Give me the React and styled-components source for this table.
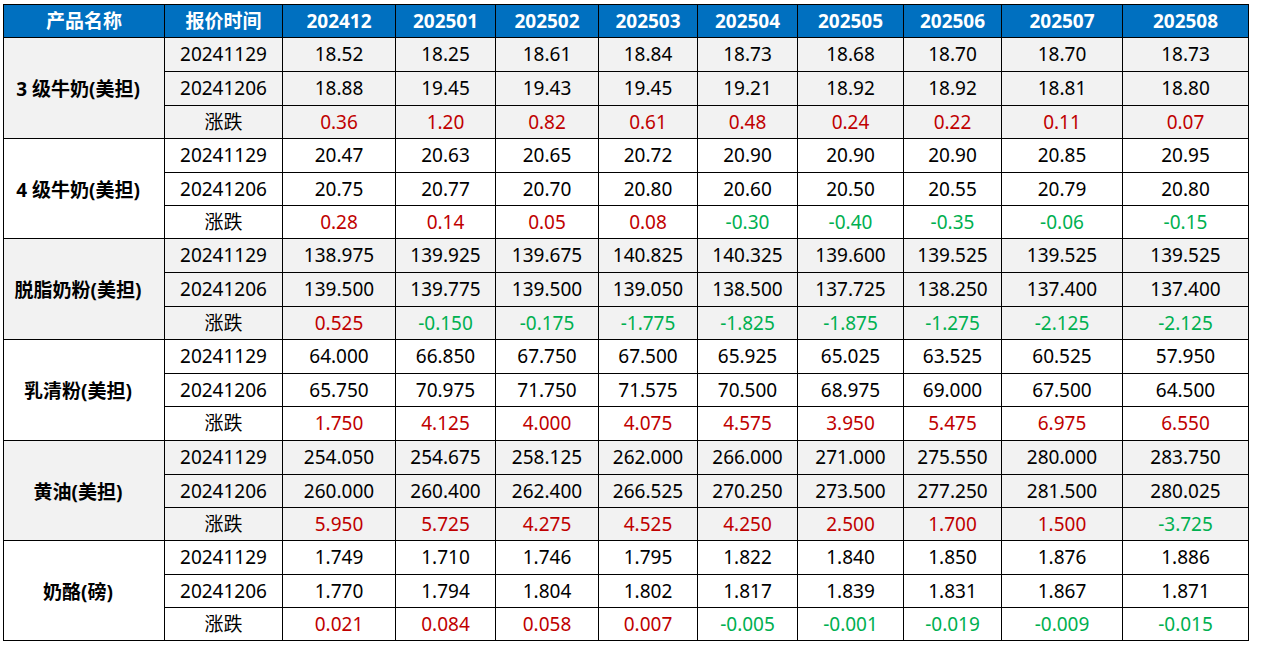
import React from 'react';
import styled, { createGlobalStyle } from 'styled-components';

const GlobalStyle = createGlobalStyle`
  html, body {
    margin: 0;
    padding: 0;
    background: #ffffff;
  }
  body {
    padding: 4px 0 0 3px;
    font-family: "Noto Sans", "Noto Sans CJK SC", sans-serif;
  }
`;

const Table = styled.table`
  border-collapse: collapse;
  table-layout: fixed;
  width: 1246px;
  font-size: 19px;
  color: #000;
`;

const HeadCell = styled.th`
  background: #0070c0;
  color: #ffffff;
  font-weight: 700;
  height: 32px;
  padding: 0;
  border: 1px solid #000;
  text-align: center;
  line-height: 1;
`;

const Row = styled.tr`
  height: ${(p) => p.$h}px;
  background: ${(p) => (p.$shade ? '#f2f2f2' : '#ffffff')};
`;

const NameCell = styled.td`
  font-weight: 700;
  text-align: center;
  padding: 0 12px 0 0;
  border: 1px solid #000;
  white-space: nowrap;
`;

const Cell = styled.td`
  text-align: center;
  padding: 0;
  border: 1px solid #000;
  line-height: 1;
  color: ${(p) => (p.$tone === 'up' ? '#c00000' : p.$tone === 'down' ? '#00b050' : '#000')};
`;

const widths = [161, 118, 113, 100, 103, 99, 100, 106, 98, 121, 126];
const months = ['202412', '202501', '202502', '202503', '202504', '202505', '202506', '202507', '202508'];

const groups = [
  {
    name: '3 级牛奶(美担)',
    a: ['18.52', '18.25', '18.61', '18.84', '18.73', '18.68', '18.70', '18.70', '18.73'],
    b: ['18.88', '19.45', '19.43', '19.45', '19.21', '18.92', '18.92', '18.81', '18.80'],
    d: ['0.36', '1.20', '0.82', '0.61', '0.48', '0.24', '0.22', '0.11', '0.07'],
  },
  {
    name: '4 级牛奶(美担)',
    a: ['20.47', '20.63', '20.65', '20.72', '20.90', '20.90', '20.90', '20.85', '20.95'],
    b: ['20.75', '20.77', '20.70', '20.80', '20.60', '20.50', '20.55', '20.79', '20.80'],
    d: ['0.28', '0.14', '0.05', '0.08', '-0.30', '-0.40', '-0.35', '-0.06', '-0.15'],
  },
  {
    name: '脱脂奶粉(美担)',
    a: ['138.975', '139.925', '139.675', '140.825', '140.325', '139.600', '139.525', '139.525', '139.525'],
    b: ['139.500', '139.775', '139.500', '139.050', '138.500', '137.725', '138.250', '137.400', '137.400'],
    d: ['0.525', '-0.150', '-0.175', '-1.775', '-1.825', '-1.875', '-1.275', '-2.125', '-2.125'],
  },
  {
    name: '乳清粉(美担)',
    a: ['64.000', '66.850', '67.750', '67.500', '65.925', '65.025', '63.525', '60.525', '57.950'],
    b: ['65.750', '70.975', '71.750', '71.575', '70.500', '68.975', '69.000', '67.500', '64.500'],
    d: ['1.750', '4.125', '4.000', '4.075', '4.575', '3.950', '5.475', '6.975', '6.550'],
  },
  {
    name: '黄油(美担)',
    a: ['254.050', '254.675', '258.125', '262.000', '266.000', '271.000', '275.550', '280.000', '283.750'],
    b: ['260.000', '260.400', '262.400', '266.525', '270.250', '273.500', '277.250', '281.500', '280.025'],
    d: ['5.950', '5.725', '4.275', '4.525', '4.250', '2.500', '1.700', '1.500', '-3.725'],
  },
  {
    name: '奶酪(磅)',
    a: ['1.749', '1.710', '1.746', '1.795', '1.822', '1.840', '1.850', '1.876', '1.886'],
    b: ['1.770', '1.794', '1.804', '1.802', '1.817', '1.839', '1.831', '1.867', '1.871'],
    d: ['0.021', '0.084', '0.058', '0.007', '-0.005', '-0.001', '-0.019', '-0.009', '-0.015'],
  },
];

const rowHeights = [
  [34, 34, 33],
  [34, 33, 33],
  [34, 34, 33],
  [34, 33, 34],
  [34, 33, 33],
  [34, 33, 33],
];

const tone = (v) => (v.startsWith('-') ? 'down' : 'up');

export default function App() {
  return (
    <>
      <GlobalStyle />
      <Table>
        <colgroup>
          {widths.map((w, i) => (
            <col key={i} style={{ width: w }} />
          ))}
        </colgroup>
        <thead>
          <tr>
            <HeadCell>产品名称</HeadCell>
            <HeadCell>报价时间</HeadCell>
            {months.map((m) => (
              <HeadCell key={m}>{m}</HeadCell>
            ))}
          </tr>
        </thead>
        <tbody>
          {groups.map((g, gi) => {
            const shade = gi % 2 === 0;
            const h = rowHeights[gi];
            return (
              <React.Fragment key={g.name}>
                <Row $shade={shade} $h={h[0]}>
                  <NameCell rowSpan={3}>{g.name}</NameCell>
                  <Cell>20241129</Cell>
                  {g.a.map((v, i) => (
                    <Cell key={i}>{v}</Cell>
                  ))}
                </Row>
                <Row $shade={shade} $h={h[1]}>
                  <Cell>20241206</Cell>
                  {g.b.map((v, i) => (
                    <Cell key={i}>{v}</Cell>
                  ))}
                </Row>
                <Row $shade={shade} $h={h[2]}>
                  <Cell>涨跌</Cell>
                  {g.d.map((v, i) => (
                    <Cell key={i} $tone={tone(v)}>{v}</Cell>
                  ))}
                </Row>
              </React.Fragment>
            );
          })}
        </tbody>
      </Table>
    </>
  );
}
